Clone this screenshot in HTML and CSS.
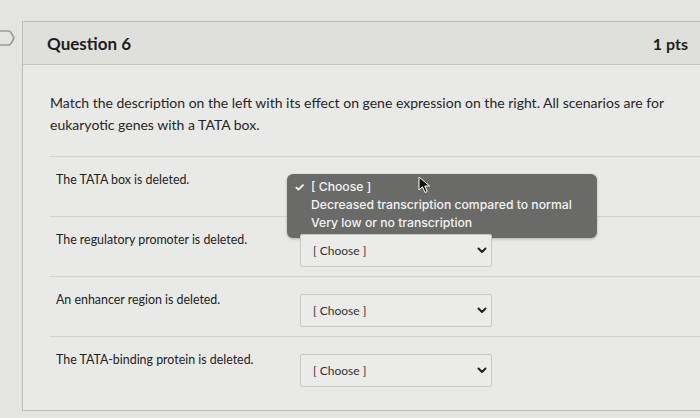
FILE: index.html
```html
<!DOCTYPE html>
<html>
<head>
<meta charset="utf-8">
<link rel="stylesheet" href="styles.css">
</head>
<body>
<div class="page">
  <div class="gutter">
    <svg class="flag" width="16" height="18" viewBox="0 0 16 18"><path d="M-2 2 H8 Q10 2 11 3.5 L14 9 L11 14.5 Q10 16 8 16 H-2" fill="none" stroke="#9a9a9a" stroke-width="1.6" stroke-linejoin="round"/></svg>
  </div>
  <div class="card">
    <div class="header">
      <span class="title">Question 6</span>
      <span class="pts">1 pts</span>
    </div>
    <div class="body">
      <p class="prompt">Match the description on the left with its effect on gene expression on the right. All scenarios are for eukaryotic genes with a TATA box.</p>
      <div class="matches">
        <div class="row">
          <div class="label">The TATA box is deleted.</div>
          <div class="cell">
            <div class="select placeholder"></div>
            <div class="popup">
              <div class="opt"><span class="check">✓</span>[ Choose ]</div>
              <div class="opt">Decreased transcription compared to normal</div>
              <div class="opt">Very low or no transcription</div>
            </div>
            <svg class="cursor" width="14" height="18" viewBox="0 0 14 18"><path d="M1 1 L1 14 L4.5 10.8 L7 16.5 L9.2 15.5 L6.8 10 L11.5 10 Z" fill="#111" stroke="#fff" stroke-width="1"/></svg>
          </div>
        </div>
        <div class="row">
          <div class="label">The regulatory promoter is deleted.</div>
          <div class="cell">
            <div class="select"><span>[ Choose ]</span><svg class="chev" width="10" height="7" viewBox="0 0 10 7"><path d="M1.5 1.5 L5 5 L8.5 1.5" fill="none" stroke="#222" stroke-width="2" stroke-linecap="round" stroke-linejoin="round"/></svg></div>
          </div>
        </div>
        <div class="row">
          <div class="label">An enhancer region is deleted.</div>
          <div class="cell">
            <div class="select"><span>[ Choose ]</span><svg class="chev" width="10" height="7" viewBox="0 0 10 7"><path d="M1.5 1.5 L5 5 L8.5 1.5" fill="none" stroke="#222" stroke-width="2" stroke-linecap="round" stroke-linejoin="round"/></svg></div>
          </div>
        </div>
        <div class="row">
          <div class="label">The TATA-binding protein is deleted.</div>
          <div class="cell">
            <div class="select"><span>[ Choose ]</span><svg class="chev" width="10" height="7" viewBox="0 0 10 7"><path d="M1.5 1.5 L5 5 L8.5 1.5" fill="none" stroke="#222" stroke-width="2" stroke-linecap="round" stroke-linejoin="round"/></svg></div>
          </div>
        </div>
      </div>
    </div>
  </div>
</div>
</body>
</html>
```
FILE: styles.css
```css
* { box-sizing: border-box; }
html, body { margin: 0; padding: 0; }
body {
  width: 700px;
  height: 418px;
  overflow: hidden;
  background: #e4e4e2;
  font-family: Lato, "Liberation Sans", sans-serif;
  color: #2a2a2a;
}
.page {
  display: flex;
  padding-top: 21px;
  height: 418px;
}
.gutter {
  width: 22px;
  flex: none;
  padding-top: 8px;
}
.flag { display: block; }
.card {
  flex: 1;
  border: 1px solid #bdbdbb;
  border-right: none;
  height: 390px;
  background: #e9e9e7;
}
.header {
  height: 43px;
  background: #dfdfdc;
  border-bottom: 1px solid #c4c4c2;
  display: flex;
  align-items: center;
  justify-content: space-between;
  padding: 0 12px 0 24px;
}
.title { font-size: 17px; font-weight: 700; color: #1e1e1e; }
.pts { font-size: 16px; font-weight: 700; color: #1e1e1e; }
.body {
  padding: 27px 0 0 27px;
}
.prompt {
  margin: 0;
  font-size: 14px;
  line-height: 22px;
  padding-right: 12px;
  color: #262626;
}
.matches {
  margin-top: 20px;
}
.row {
  display: flex;
  height: 60px;
  border-top: 1px solid #d0d0ce;
}
.label {
  width: 250px;
  flex: none;
  padding: 15px 0 0 6px;
  font-size: 12.4px;
  color: #222;
}
.cell {
  position: relative;
  padding-top: 17px;
}
.select {
  width: 192px;
  height: 33px;
  border: 1px solid #c7c7c5;
  border-radius: 2px;
  background: #ebebe9;
  display: flex;
  align-items: center;
  justify-content: space-between;
  padding: 0 4px 0 12px;
  font-size: 12px;
  color: #333;
}
.chev { display: block; }
.popup {
  position: absolute;
  left: -13px;
  top: 17px;
  width: 310px;
  height: 64px;
  background: #6a6a69;
  border-radius: 6px;
  padding: 4px 0 0 7px;
  box-shadow: 0 1px 3px rgba(0,0,0,0.25);
}
.opt {
  font-family: Inter, "Noto Sans", sans-serif;
  font-size: 12.2px;
  font-weight: 500;
  line-height: 18px;
  color: #f4f4f4;
  padding-left: 17px;
  position: relative;
  white-space: nowrap;
}
.check {
  position: absolute;
  left: 0;
  top: 0;
  font-weight: 700;
}
.cursor {
  position: absolute;
  left: 118px;
  top: 19px;
}
```
